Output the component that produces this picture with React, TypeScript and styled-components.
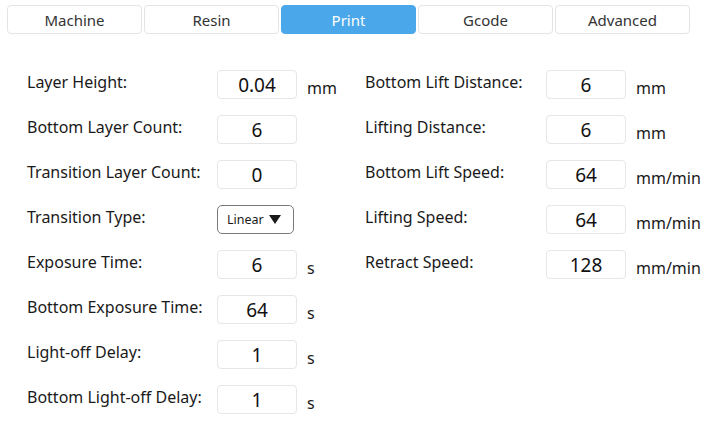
import React from "react";
import styled, { createGlobalStyle } from "styled-components";

const GlobalStyle = createGlobalStyle`
  html, body {
    margin: 0;
    padding: 0;
    background: #ffffff;
    font-family: "Noto Sans", "Liberation Sans", sans-serif;
    color: #1a1a1a;
  }
`;

const Page = styled.div`
  width: 707px;
  height: 430px;
  overflow: hidden;
  background: #ffffff;
`;

const TabBar = styled.div`
  display: flex;
  gap: 2px;
  padding: 5px 0 0 7px;
`;

const Tab = styled.div<{ $active?: boolean }>`
  width: 135px;
  height: 29px;
  box-sizing: border-box;
  display: flex;
  align-items: center;
  justify-content: center;
  border-radius: 4px;
  border: 1px solid ${p => (p.$active ? "#4aa8ea" : "#e4e4e4")};
  background: ${p => (p.$active ? "#4aa8ea" : "#ffffff")};
  color: ${p => (p.$active ? "#ffffff" : "#333333")};
  font-size: 15px;
`;

const Form = styled.div`
  display: flex;
  padding: 36px 0 0 27px;
`;

const Column = styled.div<{ $labelWidth: number; $width: number }>`
  width: ${p => p.$width}px;
  display: grid;
  grid-template-columns: ${p => p.$labelWidth}px 80px auto;
  grid-auto-rows: 29px;
  row-gap: 16px;
  column-gap: 10px;
  align-items: center;
`;

const Label = styled.div`
  font-size: 16px;
  color: #1a1a1a;
  white-space: nowrap;
  padding-bottom: 5px;
`;

const ValueBox = styled.div`
  height: 29px;
  box-sizing: border-box;
  border: 1px solid #e6e6e6;
  border-radius: 4px;
  display: flex;
  align-items: center;
  justify-content: center;
  font-size: 19px;
  color: #111111;
`;

const Unit = styled.div`
  font-size: 16px;
  color: #1a1a1a;
  padding-top: 6px;
  white-space: nowrap;
`;

const Select = styled.div`
  width: 77px;
  height: 29px;
  box-sizing: border-box;
  border: 1px solid #7a7a7a;
  border-radius: 5px;
  display: flex;
  align-items: center;
  justify-content: space-between;
  padding: 0 12px 0 9px;
  font-size: 12.5px;
  color: #1a1a1a;
`;

const ArrowIcon: React.FC = () => (
  <svg width="12" height="9" viewBox="0 0 12 9">
    <path d="M0 0 H12 L6 9 Z" fill="#1a1a1a" />
  </svg>
);

type Field = { label: string; value?: string; unit?: string; select?: boolean };

const leftFields: Field[] = [
  { label: "Layer Height:", value: "0.04", unit: "mm" },
  { label: "Bottom Layer Count:", value: "6" },
  { label: "Transition Layer Count:", value: "0" },
  { label: "Transition Type:", value: "Linear", select: true },
  { label: "Exposure Time:", value: "6", unit: "s" },
  { label: "Bottom Exposure Time:", value: "64", unit: "s" },
  { label: "Light-off Delay:", value: "1", unit: "s" },
  { label: "Bottom Light-off Delay:", value: "1", unit: "s" },
];

const rightFields: Field[] = [
  { label: "Bottom Lift Distance:", value: "6", unit: "mm" },
  { label: "Lifting Distance:", value: "6", unit: "mm" },
  { label: "Bottom Lift Speed:", value: "64", unit: "mm/min" },
  { label: "Lifting Speed:", value: "64", unit: "mm/min" },
  { label: "Retract Speed:", value: "128", unit: "mm/min" },
];

const tabs = ["Machine", "Resin", "Print", "Gcode", "Advanced"];

const FieldRows: React.FC<{ fields: Field[] }> = ({ fields }) => (
  <>
    {fields.map(f => (
      <React.Fragment key={f.label}>
        <Label>{f.label}</Label>
        {f.select ? (
          <Select>
            {f.value}
            <ArrowIcon />
          </Select>
        ) : (
          <ValueBox>{f.value}</ValueBox>
        )}
        <Unit>{f.unit}</Unit>
      </React.Fragment>
    ))}
  </>
);

export default function App() {
  return (
    <Page>
      <GlobalStyle />
      <TabBar>
        {tabs.map(t => (
          <Tab key={t} $active={t === "Print"}>
            {t}
          </Tab>
        ))}
      </TabBar>
      <Form>
        <Column $labelWidth={180} $width={338}>
          <FieldRows fields={leftFields} />
        </Column>
        <Column $labelWidth={171} $width={342}>
          <FieldRows fields={rightFields} />
        </Column>
      </Form>
    </Page>
  );
}
